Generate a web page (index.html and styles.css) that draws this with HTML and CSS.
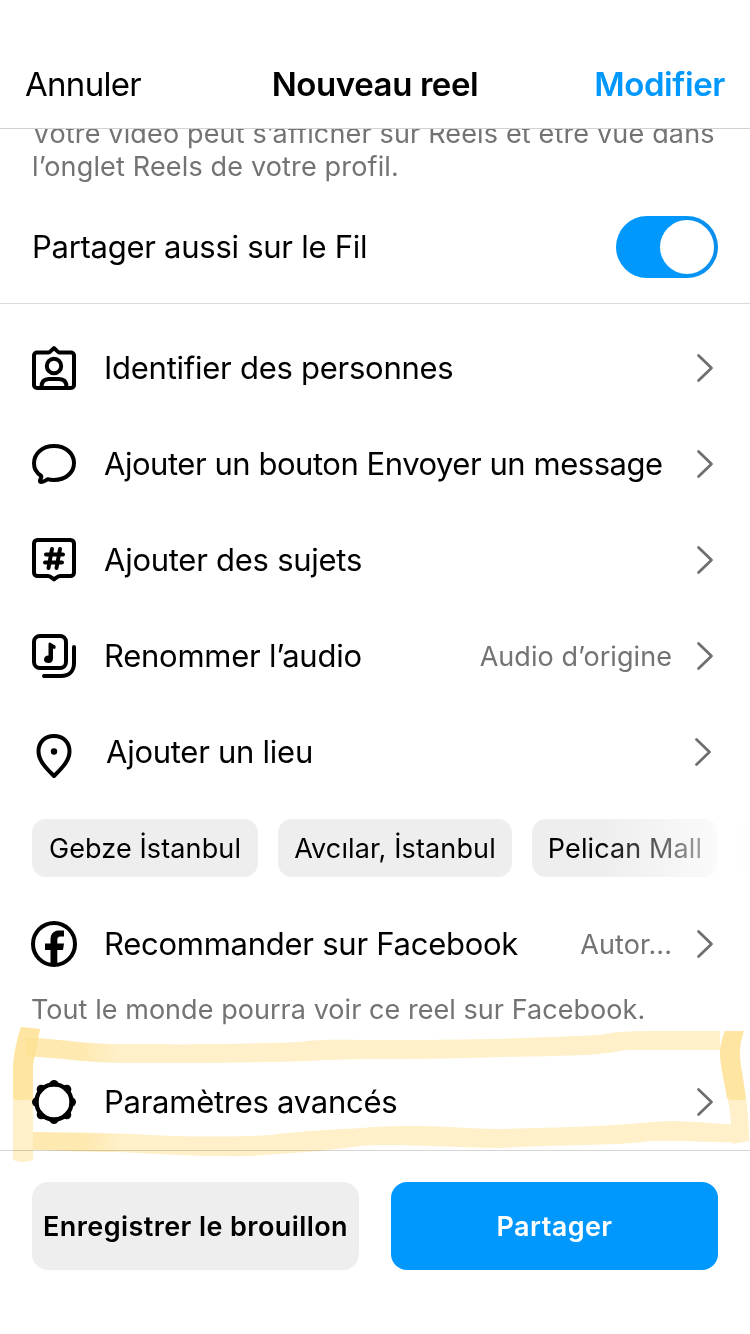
FILE: index.html
```html
<!doctype html>
<html lang="fr">
  <head>
    <meta charset="utf-8">
    <title>Nouveau reel</title>
    <link rel="stylesheet" href="styles.css">
  </head>
  <body>
    <svg width="0" height="0" class="defs">
      <symbol id="chevron" viewBox="0 0 18 30">
        <path d="M2.500 2.500L15.500 15L2.500 27.500" />
      </symbol>
    </svg>

    <header class="header">
      <span class="cancel">Annuler</span>
      <h1 class="title">Nouveau reel</h1>
      <span class="edit">Modifier</span>
    </header>

    <main class="content">
      <p class="description">
        Votre vidéo peut s’afficher sur Reels et être vue dans<br>
        l’onglet Reels de votre profil.
      </p>
      <div class="feed-row">
        <span class="feed-label">Partager aussi sur le Fil</span>
        <span class="toggle"></span>
      </div>

      <div class="options">
        <div class="row">
          <svg class="icon" viewBox="0 0 48 48">
            <path d="M7 8.500H18.500C20.500 8.500 22 5.500 24 4C26 5.500 27.500 8.500 29.500 8.500H41a3 3 0 0 1 3 3V41a3 3 0 0 1-3 3H7a3 3 0 0 1-3-3V11.500a3 3 0 0 1 3-3Z" />
            <circle cx="24" cy="22" r="7.200" />
            <path d="M11.500 43c0-5.500 3-8 7.500-8h10c4.500 0 7.500 2.500 7.500 8" />
          </svg>
          <span class="label">Identifier des personnes</span>
          <svg class="chevron"><use href="#chevron" /></svg>
        </div>
        <div class="row">
          <svg class="icon" viewBox="0 0 48 48">
            <path d="M24 6C12.500 6 4 13.500 4 23.200c0 5.500 2.800 9.800 7 12.500C12.500 37.500 9.500 39 10 41.500c.5 1.200 5-.2 7.500-2.300 2 .6 4.300.8 6.500.8 11.500 0 20-7.300 20-17S35.500 6 24 6Z" />
          </svg>
          <span class="label message">Ajouter un bouton Envoyer un message</span>
          <svg class="chevron"><use href="#chevron" /></svg>
        </div>
        <div class="row">
          <svg class="icon" viewBox="0 0 48 48">
            <path d="M7.500 4H40.500a3.500 3.500 0 0 1 3.500 3.500V36.500a3.500 3.500 0 0 1-3.500 3.500H30C27.500 40 26 42 24 43.500C22 42 20.500 40 18 40H7.500A3.500 3.500 0 0 1 4 36.500V7.500A3.500 3.500 0 0 1 7.500 4Z" />
            <path d="M22 13L18.500 32M30 13L26.500 32M16 18.500H33M15 26.500H32" />
          </svg>
          <span class="label">Ajouter des sujets</span>
          <svg class="chevron"><use href="#chevron" /></svg>
        </div>
        <div class="row">
          <svg class="icon" viewBox="0 0 48 48">
            <rect x="4" y="4" width="32" height="32" rx="6" />
            <path d="M44 15V31c0 8-5 13-13 13H14" />
            <path class="solid" d="M19.500 10.500c1.500 0 2.500 1.500 5 2.500 1.500.6 1.500 2.500.5 4l-2-.6V26c0 3.500-1.500 5-4.500 5S14 29.500 14 27.500s1.500-4 4.500-4V11.500Z" />
          </svg>
          <span class="label">Renommer l’audio</span>
          <span class="value">Audio d’origine</span>
          <svg class="chevron"><use href="#chevron" /></svg>
        </div>
        <div class="row place">
          <svg class="icon" viewBox="0 0 48 48">
            <path d="M24 8C14.500 8 8.500 14.500 8.500 23.500 8.500 33 17 41 24 48 31 41 39.500 33 39.500 23.500 39.500 14.500 33.500 8 24 8Z" />
            <circle class="solid" cx="24" cy="23.500" r="3.200" />
          </svg>
          <span class="label">Ajouter un lieu</span>
          <svg class="chevron"><use href="#chevron" /></svg>
        </div>

        <div class="chips">
          <span class="chip gebze">Gebze İstanbul</span>
          <span class="chip avcilar">Avcılar, İstanbul</span>
          <span class="chip pelican">Pelican Mall</span>
          <span class="chip more"></span>
        </div>

        <div class="row">
          <svg class="icon" viewBox="0 0 48 48">
            <circle cx="24" cy="24" r="21" />
            <path class="solid" d="M20.500 45V30H15v-6.500h5.500V20c0-7 3.500-9.500 9-9.500H34v6h-3.500c-2.300 0-3.200 1.200-3.200 3.500v3.500H34L33 30h-5.700V45Z" />
          </svg>
          <span class="label">Recommander sur Facebook</span>
          <span class="value">Autor...</span>
          <svg class="chevron"><use href="#chevron" /></svg>
        </div>
        <p class="hint">Tout le monde pourra voir ce reel sur Facebook.</p>
        <div class="row">
          <svg class="icon" viewBox="0 0 48 48">
            <circle class="ring" cx="24" cy="24" r="17.500" />
            <g class="solid">
              <circle cx="24" cy="6.500" r="4.500" /><circle cx="36.800" cy="11.200" r="4.500" />
              <circle cx="41.500" cy="24" r="4.500" /><circle cx="36.800" cy="36.800" r="4.500" />
              <circle cx="24" cy="41.500" r="4.500" /><circle cx="11.200" cy="36.800" r="4.500" />
              <circle cx="6.500" cy="24" r="4.500" /><circle cx="11.200" cy="11.200" r="4.500" />
            </g>
            <circle class="hole" cx="24" cy="24" r="15.300" />
          </svg>
          <span class="label">Paramètres avancés</span>
          <svg class="chevron"><use href="#chevron" /></svg>
        </div>
      </div>
    </main>

    <footer class="footer">
      <button class="btn draft">Enregistrer le brouillon</button>
      <button class="btn share">Partager</button>
    </footer>

    <!-- highlighter strokes around the advanced settings row -->
    <svg class="marker" viewBox="0 0 750 150">
      <defs>
        <linearGradient id="fade">
          <stop offset="0.600" stop-color="#fdd979" />
          <stop offset="1" stop-color="#fdd979" stop-opacity="0" />
        </linearGradient>
      </defs>
      <path d="M21 7L40 9L33 45V140Q23 144 13 140V45Q15 24 21 7Z" />
      <path d="M26 18C60 18 80 25 130 24C200 25 240 24 300 22C320 19 340 20 370 20C450 20 520 19 600 15C620 10 640 11 720 11V30H625C600 36 560 36 500 37C420 40 350 38 310 41C240 43 190 43 130 43C90 43 60 38 26 36Z" />
      <path d="M33 112C80 113 120 113 150 115C200 117 240 117 270 115C310 110 350 109 375 107C430 104 450 108 500 109C560 107 600 107 640 103C680 99 700 103 740 105V122C700 123 690 120 650 121C620 126 570 124 500 128C440 127 390 123 360 126C320 132 290 133 250 136C200 137 160 134 120 132C90 132 60 130 33 130Z" />
      <path d="M725 11H744C739 25 739 36 742 52C747 80 749 100 749 121L732 124C732 94 728 80 722 51C719 34 719 26 725 11Z" />
      <path class="dark" d="M13 45Q15 24 21 7L40 9L33 45V79Q23 81 13 79Z" />
      <path class="faint" d="M26 18C65 19 85 24 120 24V43C90 43 60 38 26 36Z" />
      <path class="faint" d="M33 112C75 113 95 112 122 114V132C90 132 60 131 33 130Z" />
      <path class="dark" d="M725 11H744C739 25 739 36 742 52L746 79Q738 81 727 79L722 51C719 34 719 26 725 11Z" />
    </svg>
  </body>
</html>
```
FILE: styles.css
```css
* {
  box-sizing: border-box;
}
body {
  position: relative;
  display: flex;
  flex-direction: column;
  width: 750px;
  height: 1334px;
  margin: 0;
  overflow: hidden;
  background: #fff;
  color: #000;
  font-family: Inter, "Liberation Sans", sans-serif;
  font-size: 31px;
}
.defs {
  position: absolute;
}
svg {
  fill: none;
  stroke: #000;
  stroke-width: 4;
  stroke-linecap: round;
  stroke-linejoin: round;
}
.header {
  display: grid;
  grid-template-columns: 1fr auto 1fr;
  align-items: center;
  height: 129px;
  padding: 40px 25px 0;
  border-bottom: 1px solid #d2d2d2;
  font-size: 33px;
}
.cancel {
  letter-spacing: -0.7px;
}
.title {
  margin: 0;
  font-size: 33px;
  font-weight: 600;
  letter-spacing: -0.4px;
}
.edit {
  color: #0098fd;
  font-weight: 600;
  letter-spacing: -0.4px;
  text-align: right;
}
.content {
  height: 1021px;
  overflow: hidden;
}
.description {
  margin: -12px 0 0;
  padding-left: 32px;
  color: #737373;
  font-size: 27px;
  letter-spacing: 0.16px;
  line-height: 33px;
  white-space: nowrap;
}
.feed-row {
  display: flex;
  align-items: center;
  justify-content: space-between;
  height: 121px;
  padding: 7px 32px 0;
  border-bottom: 1px solid #dbdbdb;
}
.feed-label {
  padding-bottom: 1px;
  letter-spacing: -0.27px;
}
.toggle {
  width: 102px;
  height: 62px;
  padding: 4px;
  border-radius: 31px;
  background: linear-gradient(90deg, #0098fd 55%, #0c8eea);
}
.toggle::after {
  content: "";
  display: block;
  width: 54px;
  height: 54px;
  margin-left: auto;
  border-radius: 50%;
  background: #fff;
}
.options {
  padding-top: 16px;
}
.row {
  display: flex;
  align-items: center;
  height: 96px;
  padding: 0 36px 0 30px;
}
.icon {
  flex: none;
  width: 48px;
  height: 48px;
  margin-right: 26px;
  overflow: visible;
}
.solid {
  fill: #000;
  stroke: none;
}
.ring {
  stroke-width: 4.5;
}
.hole {
  fill: #fff;
  stroke: none;
}
.label {
  flex: 1;
  padding-bottom: 2px;
  letter-spacing: -0.26px;
  white-space: nowrap;
}
.message {
  letter-spacing: -0.46px;
}
.value {
  margin-right: 24px;
  color: #737373;
  font-size: 27px;
  letter-spacing: 0.06px;
}
.chevron {
  flex: none;
  width: 18px;
  height: 30px;
  stroke: #6e6e6e;
  stroke-width: 2.7;
}
.place {
  padding-right: 38px;
}
.place .icon {
  margin-right: 28px;
}
.chips {
  position: relative;
  display: flex;
  gap: 20px;
  margin: 19px 0;
  padding-left: 32px;
  overflow: hidden;
}
.chips::after {
  content: "";
  position: absolute;
  top: 0;
  right: 0;
  width: 150px;
  height: 100%;
  background: linear-gradient(90deg, rgba(255, 255, 255, 0), rgba(255, 255, 255, 0.6) 65%, rgba(255, 255, 255, 0.95) 92%);
}
.chip {
  flex: none;
  height: 58px;
  padding-top: 1px;
  border-radius: 14px;
  background: #eee;
  font-size: 27px;
  letter-spacing: 0.12px;
  line-height: 58px;
  text-align: center;
}
.gebze {
  width: 226px;
}
.avcilar {
  width: 234px;
}
.pelican {
  width: 186px;
}
.more {
  width: 200px;
}
.hint {
  margin: 0;
  padding-left: 31px;
  height: 62px;
  color: #737373;
  font-size: 27px;
  letter-spacing: 0.05px;
  line-height: 35px;
}
.footer {
  display: flex;
  gap: 32px;
  height: 184px;
  padding: 31px 32px 0;
  border-top: 1px solid #d6d6d6;
}
.btn {
  flex: 1 1 0;
  height: 88px;
  padding: 0;
  border: none;
  border-radius: 16px;
  background: #eee;
  color: #000;
  font-family: inherit;
  font-size: 27px;
  font-weight: 600;
  letter-spacing: 0.42px;
  white-space: nowrap;
}
.share {
  background: #0098fd;
  color: #fff;
}
.marker {
  position: absolute;
  top: 1020px;
  left: 0;
  width: 750px;
  height: 150px;
  mix-blend-mode: multiply;
  fill: #fff0c9;
  stroke: none;
}
.marker .dark {
  fill: #fdd979;
  opacity: 0.5;
}
.marker .faint {
  fill: url(#fade);
  opacity: 0.3;
}
```
